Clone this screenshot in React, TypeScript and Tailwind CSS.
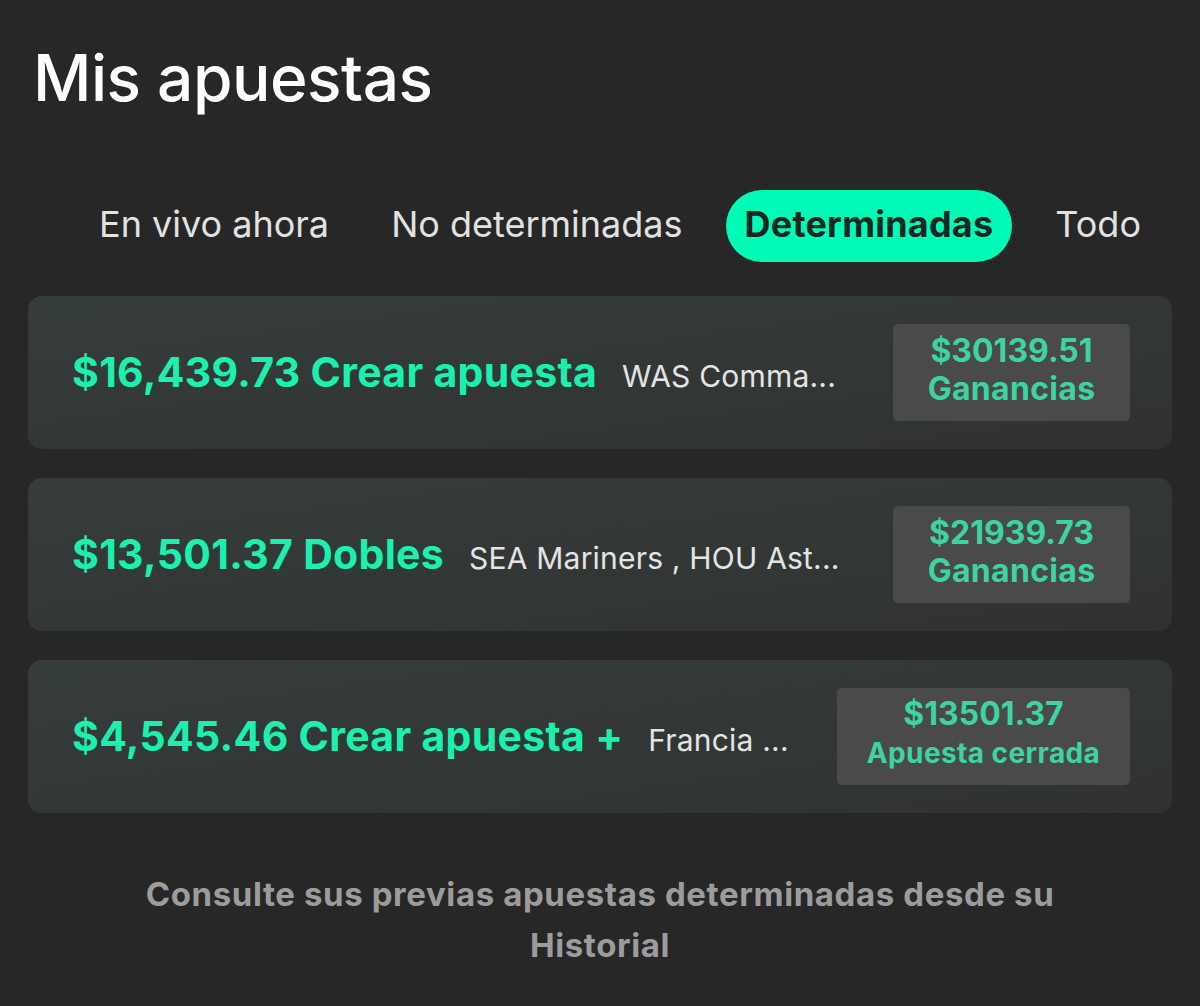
import React from 'react';

type Bet = {
  amount: string;
  kind: string;
  detail: string;
  value: string;
  status: string;
};

const TABS = ['En vivo ahora', 'No determinadas', 'Determinadas', 'Todo'];

const BETS: Bet[] = [
  { amount: '$16,439.73', kind: 'Crear apuesta', detail: 'WAS Comma...', value: '$30139.51', status: 'Ganancias' },
  { amount: '$13,501.37', kind: 'Dobles', detail: 'SEA Mariners , HOU Ast...', value: '$21939.73', status: 'Ganancias' },
  { amount: '$4,545.46', kind: 'Crear apuesta +', detail: 'Francia ...', value: '$13501.37', status: 'Apuesta cerrada' },
];

const BetCard: React.FC<{ bet: Bet }> = ({ bet }) => {
  const closed = bet.status === 'Apuesta cerrada';
  return (
    <div className="flex items-center justify-between h-[153px] pl-[44px] pr-[42px] rounded-[14px] bg-linear-to-br from-[#353d3b] to-[#303232]">
      <div className="flex items-baseline gap-[25px] min-w-0">
        <span className="text-[41px] font-bold text-[#1cf0ae] whitespace-nowrap tracking-[0.3px]">
          {bet.amount} {bet.kind}
        </span>
        <span className="text-[30px] text-[#e4e4e4] whitespace-nowrap tracking-[0.2px]">{bet.detail}</span>
      </div>
      <div
        className={`flex flex-col items-center justify-center h-[97px] pb-[6px] rounded-[5px] bg-[#4a4a4a] text-[#3dd49f] font-bold ${
          closed ? 'w-[293px]' : 'w-[237px]'
        }`}
      >
        <span className="text-[32px] leading-[38px]">{bet.value}</span>
        <span className={closed ? 'text-[28px] leading-[40px] tracking-[0.4px]' : 'text-[32px] leading-[38px] tracking-[0.3px]'}>
          {bet.status}
        </span>
      </div>
    </div>
  );
};

export default function App() {
  return (
    <div className="min-h-[1006px] w-full bg-[#272727] font-['Inter',sans-serif] text-white">
      <h1 className="pt-[40px] pl-[33px] text-[64px] leading-[76px] font-medium tracking-[-0.5px]">Mis apuestas</h1>

      <div className="flex items-center justify-between mt-[74px] pl-[80px] pr-[40px]">
        {TABS.map(tab => (
          <button
            key={tab}
            className={`h-[72px] px-[19px] pb-[3px] rounded-full text-[36px] leading-[69px] ${
              tab === 'Determinadas' ? 'bg-[#00fbb6] text-[#1b2622] font-bold tracking-[0.2px]' : 'text-[#e2e2e2]'
            }`}
          >
            {tab}
          </button>
        ))}
      </div>

      <div className="flex flex-col gap-[29px] mx-[28px] mt-[34px]">
        {BETS.map(bet => (
          <BetCard key={bet.amount} bet={bet} />
        ))}
      </div>

      <p className="mt-[56px] px-[60px] text-center text-[33px] leading-[51px] font-bold text-[#9c9c9c] tracking-[0.6px]">
        Consulte sus previas apuestas determinadas desde su
        <br />
        Historial
      </p>
    </div>
  );
}
